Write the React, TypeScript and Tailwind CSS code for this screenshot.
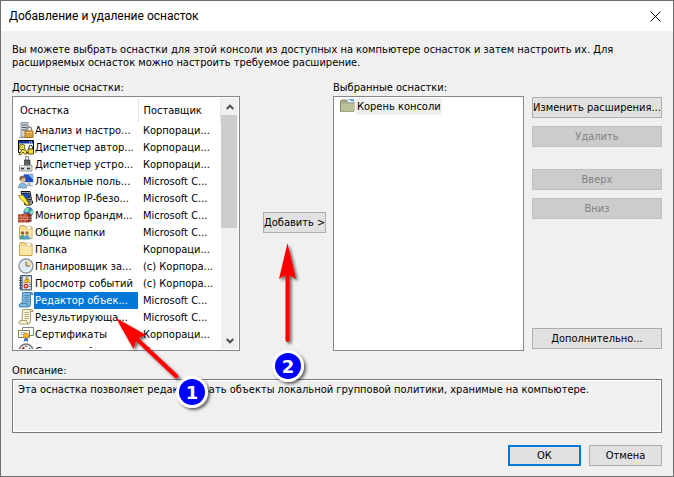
import { ReactNode } from "react";
import clsx from "clsx";

interface SnapIn {
  name: string;
  vendor: string;
  icon: ReactNode;
}

const Scroll = ({ fill, edge }: { fill: string; edge: string }) => (
  <>
    <path d="M4.500.5h9Q15 .5 15 2.500H12.500V12q0 3-2.500 3H2Q.5 14.500 1 13q.5-1.500 2-1.500h1z" fill={fill} stroke={edge} />
    <path d="M6.500 3.500h4.500M6.500 5.500h4.500M6.500 7.500h4.500M6.500 9.500h4.500" stroke={edge} strokeWidth=".8" />
    <path d="M4 11.500h4q1.500 0 1.500 3M12.500 3V2q0-1.500 1-1.500" fill="none" stroke={edge} />
  </>
);

const Folder = () => (
  <>
    <path d="M1.500 3.500l1-2h4l1 1.500h6.500v11.500h-12.500z" fill="#f5d98b" stroke="#cfa34a" />
    <path d="M8.500 2h4.500v3H8.500z" fill="#fff" stroke="#c9b070" strokeWidth=".6" />
    <path d="M2 5.500h11.500v8.500H2z" fill="#fbe7a8" />
  </>
);

const snapIns: SnapIn[] = [
  {
    name: "Анализ и настро...",
    vendor: "Корпораци...",
    icon: (
      <>
        <path d="M3 .5h7v14.500H3z" fill="#cfd8dc" stroke="#8a979d" />
        <path d="M4 3h5M4 5.500h5M4 8h4" stroke="#4b5b65" />
        <path d="M1 15.500h9" stroke="#8a979d" />
        <path d="M8.500 9V7.500a2.500 2.500 0 015 0V9" fill="none" stroke="#8b8b8b" strokeWidth="1.300" />
        <path d="M7 9h8v6.500H7z" fill="#d9a040" stroke="#a8741b" />
        <path d="M8 10.500h6" stroke="#f5d27c" />
      </>
    ),
  },
  {
    name: "Диспетчер автор...",
    vendor: "Корпораци...",
    icon: (
      <>
        <path d="M.5 1.500h15v12H.5z" fill="#fff" stroke="#000" />
        <path d="M1 2h14v2.500H1z" fill="#123a9c" />
        <path d="M11 3h1m1 0h1" stroke="#fff" />
        <circle cx="4" cy="8" r="3" fill="#ffe640" stroke="#4b4400" strokeWidth=".8" />
        <circle cx="3.500" cy="7.500" r="1" fill="#fff" stroke="#6c6300" strokeWidth=".6" />
        <path d="M4 10.500l4 .5 1 4H6.500L5 13l-2 2.500H1z" fill="#ffe640" stroke="#4b4400" strokeWidth=".8" />
        <path d="M11 10V8a1.700 1.700 0 013.400 0v2" fill="none" stroke="#222" />
        <path d="M10 10h5.500v5H10z" fill="#ffd928" stroke="#332d00" strokeWidth=".8" />
      </>
    ),
  },
  {
    name: "Диспетчер устро...",
    vendor: "Корпораци...",
    icon: (
      <>
        <path d="M7.500.5h3v4h-3z" fill="#eee" stroke="#888" />
        <path d="M6.500 4h5.500v6.500H6.500z" fill="#5c5f60" stroke="#303030" strokeWidth=".7" />
        <path d="M1.500 9.500h12.500v5.500H1.500z" fill="#d5d8d8" stroke="#9a9f9f" />
        <path d="M2 9.500h4v1.500H2z" fill="#f8f8f8" />
        <path d="M3 12.500h3M9 12.500h3" stroke="#333" strokeWidth="1.500" />
      </>
    ),
  },
  {
    name: "Локальные поль...",
    vendor: "Microsoft C...",
    icon: (
      <>
        <path d="M5.500 1h10v8.500h-10z" fill="#1f4fc0" stroke="#d0d6dc" />
        <path d="M10 1.500h5v5z" fill="#8bb6f0" />
        <path d="M9 10h4v2h2v1.500H8z" fill="#b9c1c7" />
        <path d="M.5 15q0-5 4-5t4 5z" fill="#88b9dd" stroke="#4d7fa8" strokeWidth=".6" />
        <circle cx="4.500" cy="6.500" r="3" fill="#e5b98e" />
        <path d="M1.500 7V4.500Q2 2.500 4.500 2.500t3 2.500Q4 4.500 3 7z" fill="#86684a" />
      </>
    ),
  },
  {
    name: "Монитор IP-безо...",
    vendor: "Microsoft C...",
    icon: (
      <>
        <path d="M3 1.500h9l1.500 8-8 .5z" fill="#d7d7d7" stroke="#111" />
        <path d="M4.500 3h6.500l1 5-6 .5z" fill="#164bb5" stroke="#000" strokeWidth=".6" />
        <path d="M6 11h8.500v2.500l-2 1.500H7z" fill="#c6c6c6" stroke="#111" />
        <path d="M8 13h5" stroke="#333" />
        <path d="M.5 5.500L5 5 8 9l3 5.500-2 .8L4.500 11 2.500 9z" fill="#ffe735" stroke="#645a00" strokeWidth=".6" />
      </>
    ),
  },
  {
    name: "Монитор брандм...",
    vendor: "Microsoft C...",
    icon: (
      <>
        <circle cx="10.500" cy="5" r="4.700" fill="#2f87d4" stroke="#276198" strokeWidth=".5" />
        <path d="M8 1q3-1 3 1.500T8.500 5 6.500 3zM12 4l3-1v3l-2 2.500-1.500-2z" fill="#8fd8a8" />
        <path d="M0 7.500l10-1.500v9.500H0z" fill="#b8442d" />
        <path d="M10 6l3.500 1.500v7L10 15.500z" fill="#793021" />
        <path d="M0 10h13M0 12.500h13M3 7v3M7 7v3M5 10v2.500M9 10v2.500M3 12.500v3M7 12.500v3" stroke="#e7b0a1" strokeWidth=".6" />
      </>
    ),
  },
  {
    name: "Общие папки",
    vendor: "Microsoft C...",
    icon: (
      <>
        <Folder />
        <circle cx="4.500" cy="9" r="1.700" fill="#8b5d3a" />
        <circle cx="9" cy="9" r="1.700" fill="#a56c40" />
        <path d="M1.500 15.500q0-4.500 3-4.500t3 4.500z" fill="#4da28f" />
        <path d="M6.500 15.500q0-4.500 2.500-4.500t3 4.500z" fill="#5b9cd3" />
      </>
    ),
  },
  { name: "Папка", vendor: "Корпораци...", icon: <Folder /> },
  {
    name: "Планировщик за...",
    vendor: "(c) Корпора...",
    icon: (
      <>
        <circle cx="8" cy="8" r="7" fill="#eef2f5" stroke="#8b969e" strokeWidth="1.400" />
        <circle cx="8" cy="8" r="5.300" fill="#dce9f3" />
        <path d="M8 8V2.700A5.300 5.300 0 0113.300 8z" fill="#f3dca0" />
        <path d="M8 3.500V8h4" fill="none" stroke="#6a6255" />
      </>
    ),
  },
  {
    name: "Просмотр событий",
    vendor: "(c) Корпора...",
    icon: (
      <>
        <path d="M2.500.5h11v14.500h-11z" fill="#7795b7" stroke="#46617f" />
        <path d="M5 1.500h8v12.500H5z" fill="#dfe9f2" />
        <path d="M1 3h3M1 5.500h3M1 8h3M1 10.500h3M1 13h3" stroke="#444f5b" />
        <path d="M9 1.500l3.500 6h-7z" fill="#f8c936" stroke="#b57e12" strokeWidth=".6" />
        <path d="M9 3.500v2m0 .8v.7" stroke="#513500" strokeWidth=".8" />
        <circle cx="8" cy="11" r="2.500" fill="#d83428" />
        <path d="M7 10l2 2m0-2l-2 2" stroke="#fff" strokeWidth=".7" />
        <path d="M11 9.500h2M11 11.500h2" stroke="#5c7c9a" />
      </>
    ),
  },
  { name: "Редактор объек...", vendor: "Microsoft C...", icon: <Scroll fill="#7fb6dc" edge="#4684b5" /> },
  { name: "Результирующа...", vendor: "Microsoft C...", icon: <Scroll fill="#fbf4d2" edge="#a59b70" /> },
  {
    name: "Сертификаты",
    vendor: "Корпораци...",
    icon: (
      <>
        <path d="M4.500 1.500h11v8h-11z" fill="#fff" stroke="#7d8790" />
        <path d="M.5 4.500h11v7H.5z" fill="#fff" stroke="#8a7a50" />
        <path d="M2.500 6.500h4M2.500 8.500h3" stroke="#8eb2d6" />
        <path d="M7 11l-1.500 5L8 14.500 10 16l-.5-5z" fill="#2a62d2" />
        <circle cx="8" cy="9.500" r="2.700" fill="#f5b52c" stroke="#b67813" strokeWidth=".6" />
      </>
    ),
  },
  {
    name: "Системный мо...",
    vendor: "Корпораци...",
    icon: (
      <>
        <circle cx="8" cy="8" r="7" fill="#f5f5f5" stroke="#777" strokeWidth="1.500" />
        <circle cx="8" cy="8" r="4.800" fill="#fff" stroke="#aaa" strokeWidth=".6" />
        <path d="M4.500 4.500L8 8.500" stroke="#c22" strokeWidth="2" />
        <path d="M8 2.500v1.500M12 5l-1 1" stroke="#333" />
      </>
    ),
  },
];

interface DialogButtonProps {
  children: ReactNode;
  disabled?: boolean;
  primary?: boolean;
  className?: string;
}

function DialogButton({ children, disabled, primary, className }: DialogButtonProps) {
  return (
    <button
      type="button"
      disabled={disabled}
      className={clsx(
        "h-[21px] shrink-0 whitespace-nowrap text-center leading-[17px]",
        primary ? "border-2 border-[#0078d7] bg-[#e1e1e1]" : "border",
        !primary && !disabled && "border-[#adadad] bg-[#e1e1e1]",
        disabled && "border-[#bfbfbf] bg-[#cccccc] text-[#838383]",
        className
      )}
    >
      {children}
    </button>
  );
}

function ScrollBar() {
  return (
    <div className="flex w-[17px] shrink-0 flex-col bg-[#f0f0f0]">
      <button type="button" aria-label="Прокрутить вверх" className="flex h-[17px] items-center justify-center">
        <svg viewBox="0 0 8 6" className="h-1.5 w-2">
          <path d="M.7 5L4 1.700 7.300 5" fill="none" stroke="#505050" strokeWidth="2" />
        </svg>
      </button>
      <div className="flex-1 pr-px">
        <div className="h-[52%] bg-[#cdcdcd]" />
      </div>
      <button type="button" aria-label="Прокрутить вниз" className="flex h-[17px] items-center justify-center">
        <svg viewBox="0 0 8 6" className="h-1.5 w-2">
          <path d="M.7 1L4 4.300 7.300 1" fill="none" stroke="#505050" strokeWidth="2" />
        </svg>
      </button>
    </div>
  );
}

// Numbered steps with arrows, drawn over the dialog
function StepMarks() {
  return (
    <svg width="674" height="477" viewBox="0 0 674 477" className="pointer-events-none absolute -left-px -top-px">
      <defs>
        <filter id="shadow" x="-30%" y="-30%" width="160%" height="160%">
          <feDropShadow dx="2" dy="2" stdDeviation="1.500" floodColor="#000" floodOpacity=".6" />
        </filter>
      </defs>
      <g filter="url(#shadow)" fill="#ff0000">
        <path d="M116 318l30 17-7.500 3 39.500 37q1 1-.5 2.500t-2.500.5L136 341l-2.500 8z" />
        <path d="M287.500 243l8.500 36-6.500-4V340q0 2-2 2t-2-2v-65l-6.500 4z" />
      </g>
      <g filter="url(#shadow)" fill="#fff">
        <circle cx="192" cy="392" r="16" />
        <circle cx="288" cy="366" r="16" />
      </g>
      <g fill="#0000ff">
        <circle cx="192" cy="392" r="13" />
        <circle cx="288" cy="366" r="13" />
      </g>
      <g fill="#fff" textAnchor="middle" className="font-['DejaVu_Sans',sans-serif] text-[18px] font-bold">
        <text x="192" y="399">1</text>
        <text x="288" y="373">2</text>
      </g>
    </svg>
  );
}

export default function App() {
  const selected = 10;

  return (
    <div className="relative flex h-screen flex-col border border-[#6f6d6f] bg-[#f0f0f0] font-['DejaVu_Sans_Condensed','DejaVu_Sans',sans-serif] text-[11px] leading-[13px] text-black">
      {/* Title bar */}
      <header className="flex h-[30px] shrink-0 items-center justify-between bg-white pl-2 pr-2.5">
        <h1 className="font-['Roboto',sans-serif] text-[12px]">Добавление и удаление оснасток</h1>
        <button type="button" aria-label="Закрыть" className="p-0.5">
          <svg viewBox="0 0 11 11" className="size-[11px]">
            <path d="M.5.5l10 10M10.500.5l-10 10" stroke="#000" />
          </svg>
        </button>
      </header>

      <main className="flex min-h-0 flex-1 flex-col px-[11px] pb-2.5 pt-3">
        <p className="shrink-0">
          Вы можете выбрать оснастки для этой консоли из доступных на компьютере оснасток и затем настроить их. Для{" "}
          расширяемых оснасток можно настроить требуемое расширение.
        </p>

        <div className="mt-3 flex min-h-0 flex-1">
          {/* Available snap-ins */}
          <section className="flex w-[228px] flex-col">
            <h2 className="mb-0.5">Доступные оснастки:</h2>
            <div className="flex min-h-0 flex-1 overflow-hidden border border-[#828790] bg-white p-px">
              <div className="min-w-0 flex-1 overflow-hidden">
                <table className="w-full table-fixed whitespace-nowrap text-left">
                  <thead>
                    <tr className="h-6">
                      <th className="w-[124px] border-r border-[#e5e5e5] pl-1.5 font-normal">Оснастка</th>
                      <th className="border-r border-[#e5e5e5] pl-[5px] font-normal">Поставщик</th>
                    </tr>
                  </thead>
                  <tbody>
                    {snapIns.map((item, idx) => (
                      <tr key={item.name} className="h-[17px]">
                        <td className="p-0">
                          <div className="flex h-[17px] pl-1">
                            <svg viewBox="0 0 16 16" className="size-4 shrink-0">
                              {item.icon}
                            </svg>
                            <span
                              className={clsx(
                                "flex-1 pl-px leading-[17px]",
                                idx === selected && "bg-[#0078d7] text-white"
                              )}
                            >
                              {item.name}
                            </span>
                          </div>
                        </td>
                        <td className="p-0 pl-[5px] leading-[17px]">{item.vendor}</td>
                      </tr>
                    ))}
                  </tbody>
                </table>
              </div>
              <ScrollBar />
            </div>
          </section>

          <div className="flex flex-1 items-center justify-end pr-[7px] pt-3">
            <DialogButton className="w-[63px]">Добавить &gt;</DialogButton>
          </div>

          {/* Selected snap-ins */}
          <section className="flex w-[191px] flex-col">
            <h2 className="mb-0.5">Выбранные оснастки:</h2>
            <div className="flex-1 border border-[#828790] bg-white pl-1.5 pt-px">
              <div className="flex h-[17px]">
                <svg viewBox="0 0 16 16" className="size-4 shrink-0">
                  <path d="M.5 3.500l1-1.500h5l1 1.500h6.500v10H.5z" fill="#a5aa83" stroke="#888d68" />
                  <path d="M7.500 1.500h6v3h-6z" fill="#edf5fb" stroke="#8aa9c2" strokeWidth=".7" />
                  <path d="M10.500 1.500h3v1.500h-3z" fill="#3d91d6" />
                  <path d="M1 5.500h13v8H1z" fill="#bcc19b" />
                </svg>
                <span className="bg-[#f0f0f0] px-px leading-[17px]">Корень консоли</span>
              </div>
            </div>
          </section>

          <div className="ml-2 flex w-[130px] flex-col pb-0.5 pt-4">
            <DialogButton>Изменить расширения...</DialogButton>
            <DialogButton disabled className="mt-2">Удалить</DialogButton>
            <DialogButton disabled className="mt-[22px]">Вверх</DialogButton>
            <DialogButton disabled className="mt-2">Вниз</DialogButton>
            <DialogButton className="mt-auto">Дополнительно...</DialogButton>
          </div>
        </div>

        {/* Description */}
        <section className="mt-[13px] shrink-0">
          <h2 className="mb-0.5">Описание:</h2>
          <div className="h-[54px] border border-[#7a7a7a] px-[5px] py-[3px] shadow-[inset_0_0_0_1px_#ffffff]">
            Эта оснастка позволяет редактировать объекты локальной групповой политики, хранимые на компьютере.
          </div>
        </section>

        <footer className="mt-3 flex shrink-0 justify-end gap-2">
          <DialogButton primary className="w-[73px]">ОК</DialogButton>
          <DialogButton className="w-[73px]">Отмена</DialogButton>
        </footer>
      </main>

      <StepMarks />
    </div>
  );
}
